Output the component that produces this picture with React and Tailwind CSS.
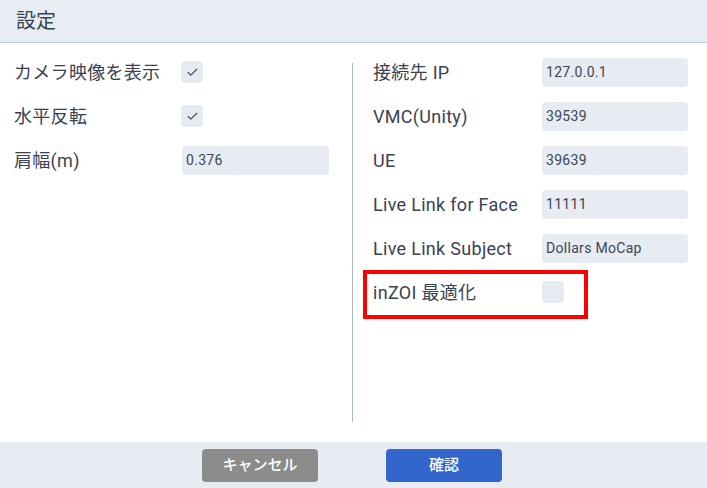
import { Check } from "lucide-react";

const font = { fontFamily: 'Roboto, "Noto Sans CJK JP", sans-serif' };

const CheckBox = ({ checked }) => (
  <div className="w-[22px] h-[22px] rounded-[4px] bg-[#e6eaf1] flex items-center justify-center">
    {checked && <Check size={13} strokeWidth={2} className="text-[#3d4654]" />}
  </div>
);

const Field = ({ value, width }) => (
  <div
    className={`h-[29px] rounded-[4px] bg-[#e7ebf2] flex items-center pl-1 text-[14px] tracking-[0.3px] text-[#3d4654] ${width}`}
  >
    {value}
  </div>
);

const Row = ({ label, labelWidth, children, className = "" }) => (
  <div className={`h-[44px] flex items-center ${className}`}>
    <div className={`text-[18px] tracking-[0.3px] text-[#3a4250] shrink-0 ${labelWidth}`}>{label}</div>
    {children}
  </div>
);

export default function App() {
  return (
    <div className="w-[707px] h-[488px] bg-white flex flex-col" style={font}>
      {/* header */}
      <div className="h-[43px] shrink-0 bg-[#e8edf4] border-b border-[#bccadb] flex items-center pl-4">
        <span className="text-[20px] text-[#3a4250]">設定</span>
      </div>

      {/* body */}
      <div className="flex-1 flex">
        <div className="w-[352px] pl-[14px] pt-[7px]">
          <Row label="カメラ映像を表示" labelWidth="w-[167px]">
            <CheckBox checked />
          </Row>
          <Row label="水平反転" labelWidth="w-[167px]">
            <CheckBox checked />
          </Row>
          <Row label="肩幅(m)" labelWidth="w-[168px]">
            <Field value="0.376" width="w-[147px]" />
          </Row>
        </div>

        <div className="w-px bg-[#a9b9cd] my-5" />

        <div className="flex-1 pl-5 pt-[7px]">
          <Row label="接続先 IP" labelWidth="w-[169px]">
            <Field value="127.0.0.1" width="w-[146px]" />
          </Row>
          <Row label="VMC(Unity)" labelWidth="w-[169px]">
            <Field value="39539" width="w-[146px]" />
          </Row>
          <Row label="UE" labelWidth="w-[169px]">
            <Field value="39639" width="w-[146px]" />
          </Row>
          <Row label="Live Link for Face" labelWidth="w-[169px]">
            <Field value="11111" width="w-[146px]" />
          </Row>
          <Row label="Live Link Subject" labelWidth="w-[169px]">
            <Field value="Dollars MoCap" width="w-[146px]" />
          </Row>
          <Row label="inZOI 最適化" labelWidth="w-[169px]" className="relative">
            <CheckBox />
            <div className="absolute left-[-10px] top-0 w-[225px] h-[49px] border-4 border-[#ff0000]" />
          </Row>
        </div>
      </div>

      {/* footer */}
      <div className="h-[46px] shrink-0 bg-[#e7ecf3] flex items-center justify-center gap-[68px] pr-[3px]">
        <button className="w-[116px] h-[33px] rounded-[4px] bg-[#8c8c8c] text-white text-[15px] font-medium">
          キャンセル
        </button>
        <button className="w-[116px] h-[33px] rounded-[4px] bg-[#3366cc] text-white text-[15px] font-medium">
          確認
        </button>
      </div>
    </div>
  );
}
